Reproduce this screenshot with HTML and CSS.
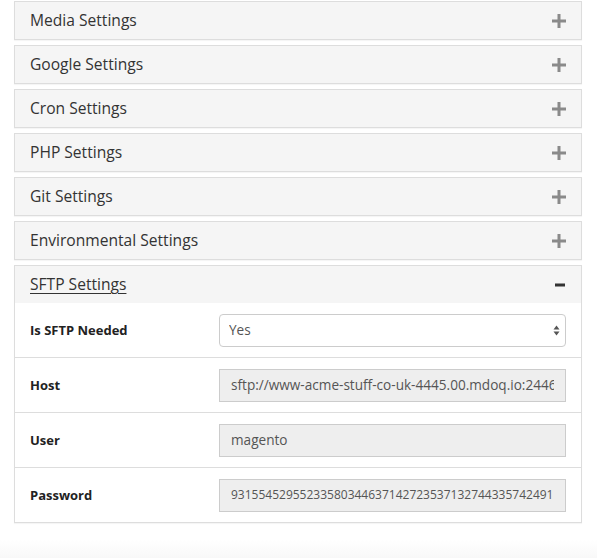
FILE: index.html
```html
<!DOCTYPE html>
<html>
<head>
<meta charset="utf-8">
<link rel="stylesheet" href="styles.css">
</head>
<body>
<div class="accordion">
  <div class="panel">
    <div class="panel-heading"><span class="title">Media Settings</span><svg class="plus" width="14" height="14" viewBox="0 0 14 14"><rect x="0" y="5.5" width="14" height="3" fill="#8a8a8a"/><rect x="5.5" y="0" width="3" height="14" fill="#8a8a8a"/></svg></div>
  </div>
  <div class="panel">
    <div class="panel-heading"><span class="title">Google Settings</span><svg class="plus" width="14" height="14" viewBox="0 0 14 14"><rect x="0" y="5.5" width="14" height="3" fill="#8a8a8a"/><rect x="5.5" y="0" width="3" height="14" fill="#8a8a8a"/></svg></div>
  </div>
  <div class="panel">
    <div class="panel-heading"><span class="title">Cron Settings</span><svg class="plus" width="14" height="14" viewBox="0 0 14 14"><rect x="0" y="5.5" width="14" height="3" fill="#8a8a8a"/><rect x="5.5" y="0" width="3" height="14" fill="#8a8a8a"/></svg></div>
  </div>
  <div class="panel">
    <div class="panel-heading"><span class="title">PHP Settings</span><svg class="plus" width="14" height="14" viewBox="0 0 14 14"><rect x="0" y="5.5" width="14" height="3" fill="#8a8a8a"/><rect x="5.5" y="0" width="3" height="14" fill="#8a8a8a"/></svg></div>
  </div>
  <div class="panel">
    <div class="panel-heading"><span class="title">Git Settings</span><svg class="plus" width="14" height="14" viewBox="0 0 14 14"><rect x="0" y="5.5" width="14" height="3" fill="#8a8a8a"/><rect x="5.5" y="0" width="3" height="14" fill="#8a8a8a"/></svg></div>
  </div>
  <div class="panel">
    <div class="panel-heading"><span class="title">Environmental Settings</span><svg class="plus" width="14" height="14" viewBox="0 0 14 14"><rect x="0" y="5.5" width="14" height="3" fill="#8a8a8a"/><rect x="5.5" y="0" width="3" height="14" fill="#8a8a8a"/></svg></div>
  </div>
  <div class="panel open">
    <div class="panel-heading"><span class="title active">SFTP Settings</span><svg class="minus" width="10" height="14" viewBox="0 0 10 14"><rect x="0" y="5.5" width="10" height="3" fill="#333"/></svg></div>
    <div class="panel-body">
      <div class="form-row">
        <label class="label">Is SFTP Needed</label>
        <div class="select-wrap">
          <select class="control select"><option>Yes</option><option>No</option></select>
          <svg class="arrows" width="7" height="11" viewBox="0 0 7 11"><path d="M0.5 4.5 L3.5 0.5 L6.5 4.5 Z" fill="#555"/><path d="M0.5 6.5 L3.5 10.5 L6.5 6.5 Z" fill="#555"/></svg>
        </div>
      </div>
      <div class="form-row">
        <label class="label">Host</label>
        <input class="control readonly" readonly value="sftp://www-acme-stuff-co-uk-4445.00.mdoq.io:2446">
      </div>
      <div class="form-row">
        <label class="label">User</label>
        <input class="control readonly" readonly value="magento">
      </div>
      <div class="form-row">
        <label class="label">Password</label>
        <input class="control readonly digits" readonly value="93155452955233580344637142723537132744335742491">
      </div>
    </div>
  </div>
</div>
<div class="fade"></div>
</body>
</html>
```
FILE: styles.css
```css
html, body {
  margin: 0;
  padding: 0;
  background: #fff;
}
body {
  font-family: "Open Sans", "Noto Sans", sans-serif;
  color: #333;
  height: 558px;
  overflow: hidden;
  position: relative;
}
.accordion {
  padding: 1px 15px 0 14px;
}
.panel {
  border: 1px solid #dddddd;
  background: #f5f5f5;
  margin-bottom: 5px;
  box-shadow: 0 1px 1px rgba(0,0,0,0.04);
}
.panel-heading {
  height: 37px;
  display: flex;
  align-items: center;
  justify-content: space-between;
  padding: 0 15px;
  background: #f5f5f5;
}
.title {
  font-size: 15.6px;
  color: #333;
  margin-top: -1px;
}
.title.active {
  text-decoration: underline;
  text-underline-offset: 3px;
}
.minus {
  margin-right: 1px;
}
.panel-body {
  background: #fff;
}
.form-row {
  display: grid;
  grid-template-columns: 189px 1fr;
  align-items: center;
  height: 54px;
  padding: 0 15px;
  border-top: 1px solid #dddddd;
}
.form-row:first-child {
  border-top: none;
}
.label {
  font-weight: 700;
  font-size: 13px;
  color: #222;
  margin-top: -1px;
}
.control {
  box-sizing: border-box;
  width: 100%;
  height: 33px;
  font-family: "Open Sans", "Noto Sans", sans-serif;
  font-size: 13.6px;
  color: #555;
  border: 1px solid #cccccc;
  padding: 0 11px 1px;
  margin: 0;
  outline: none;
}
.select-wrap {
  position: relative;
}
.select {
  appearance: none;
  -webkit-appearance: none;
  background: #fff;
  border-radius: 4px;
  padding-left: 9px;
}
.arrows {
  position: absolute;
  right: 6px;
  top: 11px;
}
.readonly {
  background: #eeeeee;
  border-radius: 0;
}
.digits {
  font-size: 12px;
}
.fade {
  position: absolute;
  left: 0;
  right: 0;
  bottom: 0;
  height: 18px;
  background: linear-gradient(to bottom, #ffffff, #f8f8f8);
}
```
